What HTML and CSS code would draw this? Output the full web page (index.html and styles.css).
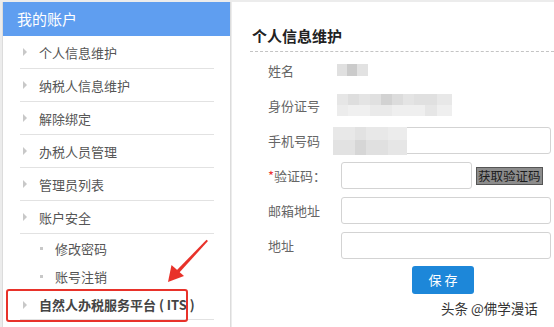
FILE: index.html
```html
<!DOCTYPE html>
<html lang="zh-CN">
<head>
<meta charset="utf-8">
<title>个人信息维护</title>
<link rel="stylesheet" href="styles.css">
</head>
<body>
<div class="page">
  <aside class="sidebar">
    <div class="side-head">我的账户</div>
    <ul class="menu">
      <li class="item"><span class="tri"></span>个人信息维护</li>
      <li class="item"><span class="tri"></span>纳税人信息维护</li>
      <li class="item"><span class="tri"></span>解除绑定</li>
      <li class="item"><span class="tri"></span>办税人员管理</li>
      <li class="item"><span class="tri"></span>管理员列表</li>
      <li class="item"><span class="tri"></span>账户安全</li>
      <li class="sub"><span class="dot"></span>修改密码</li>
      <li class="sub"><span class="dot"></span>账号注销</li>
      <li class="item its"><span class="tri"></span>自然人办税服务平台 ( ITS )</li>
    </ul>
  </aside>
  <main class="main">
    <div class="title-wrap"><h1 class="title">个人信息维护</h1></div>
    <div class="form">
      <div class="row"><span class="label">姓名</span><span class="blur blur-name"></span></div>
      <div class="row"><span class="label">身份证号</span><span class="blur blur-id"><span class="blur-line a"></span><span class="blur-line b"></span></span></div>
      <div class="row"><span class="label">手机号码</span><span class="field-wrap"><span class="input wide"></span><span class="blur blur-phone"></span></span></div>
      <div class="row"><span class="label"><span class="req">*</span>验证码：</span><span class="input short"></span><span class="code-btn">获取验证码</span></div>
      <div class="row"><span class="label">邮箱地址</span><span class="input wide"></span></div>
      <div class="row"><span class="label">地址</span><span class="input wide"></span></div>
      <div class="btn-row"><span class="save">保 存</span></div>
    </div>
  </main>
</div>
<div class="highlight"></div>
<svg class="arrow" width="60" height="60" viewBox="160 232 60 60">
  <path d="M208 241 L206.5 239.8 L176 271 L178.5 273.5 Z" fill="#e8322a"/>
  <path d="M168 282 L171.5 265 L184 276 Z" fill="#e8322a"/>
</svg>
<div class="watermark">头条 @佛学漫话</div>
</body>
</html>
```

FILE: styles.css
```css
* { box-sizing: border-box; }
html, body { margin: 0; padding: 0; }
body {
  width: 554px;
  height: 327px;
  overflow: hidden;
  background: #ececec;
  font-family: "Noto Sans CJK SC", "Noto Sans", sans-serif;
  color: #555;
  position: relative;
}
.page {
  display: flex;
  padding: 2px 0 0 2px;
  height: 327px;
  gap: 1px;
}
.sidebar {
  width: 229px;
  background: #fff;
  border-left: 1px solid #dcdcdc;
  border-right: 1px solid #dcdcdc;
}
.side-head {
  height: 34px;
  line-height: 33px;
  background: #5f9ef0;
  color: #fff;
  font-size: 15px;
  padding-left: 14px;
}
.menu {
  list-style: none;
  margin: 0;
  padding: 0 16px 0 17px;
}
.item {
  height: 33px;
  border-bottom: 1px solid #e2e2e2;
  display: flex;
  align-items: center;
  font-size: 13px;
  color: #555;
}
.tri {
  width: 0;
  height: 0;
  border-left: 4px solid #c8c8c8;
  border-top: 4px solid transparent;
  border-bottom: 4px solid transparent;
  margin: 0 12px 0 3px;
}
.sub {
  height: 28px;
  display: flex;
  align-items: center;
  font-size: 13px;
  color: #555;
  padding-left: 20px;
}
.dot {
  width: 3px;
  height: 3px;
  background: #c8c8c8;
  margin-right: 12px;
}
.its {
  height: 30px;
  font-weight: bold;
  color: #444;
  font-size: 13px;
  white-space: pre;
}
.highlight {
  position: absolute;
  left: 6px;
  top: 289px;
  width: 182px;
  height: 33px;
  border: 2px solid #e8322a;
  border-radius: 3px;
}
.arrow {
  position: absolute;
  left: 160px;
  top: 232px;
}
.main {
  flex: 1;
  background: #fff;
}
.title-wrap {
  margin-left: 18px;
  padding: 24px 0 5px 2px;
  border-bottom: 1px dashed #c4c4c4;
}
.title {
  margin: 0;
  font-size: 15px;
  line-height: 20px;
  font-weight: bold;
  color: #222;
}
.form {
  padding: 1px 0 0 36px;
}
.row {
  height: 35px;
  display: flex;
  align-items: center;
}
.label {
  width: 69px;
  font-size: 13px;
  color: #666;
  flex: none;
}
.req { color: #e33; }
.input {
  display: block;
  height: 27px;
  border: 1px solid #d3d3d3;
  border-radius: 3px;
  background: #fff;
  flex: none;
}
.input.wide { width: 210px; margin-left: 4px; }
.input.short { width: 131px; margin-left: 4px; }
.field-wrap {
  position: relative;
  display: block;
}
.code-btn {
  margin-left: 4px;
  height: 18px;
  line-height: 16px;
  padding: 0 1px;
  font-size: 12.5px;
  color: #1c1c1c;
  background: #8c8c8c;
  border: 1px solid #555;
}
.blur { display: block; }
.blur-name {
  width: 31px;
  height: 12px;
  margin-top: -2px;
  background: linear-gradient(90deg, #e0e0e0 0 10px, #cbcbcb 10px 20px, #e2e2e2 20px);
}
.blur-id {
  width: 115px;
  margin-top: -2px;
}
.blur-line { display: block; height: 11px; }
.blur-line.a {
  background: linear-gradient(90deg, #e6e6e6 0 11px, #dedede 11px 22px, #e4e4e4 22px 33px, #e0e0e0 33px 44px, #d2d2d2 44px 55px, #dcdcdc 55px 66px, #e4e4e4 66px 77px, #e0e0e0 77px 100px, #e8e8e8 100px);
}
.blur-line.b {
  background: linear-gradient(90deg, #ececec 0 11px, #f0f0f0 11px 33px, #eaeaea 33px 55px, #efefef 55px 88px, #e6e6e6 88px 100px, #efefef 100px);
}
.blur-phone {
  position: absolute;
  left: -4px;
  top: 0;
  width: 74px;
  height: 28px;
  background:
    linear-gradient(90deg, #e8e8e8 0 22px, #e2e2e2 22px 33px, #e8e8e8 33px 55px, #ececec 55px 74px) top / 100% 13px no-repeat,
    linear-gradient(90deg, #e2e2e2 0 22px, #d6d6d6 22px 33px, #e0e0e0 33px 55px, #e6e6e6 55px 74px) bottom / 100% 15px no-repeat;
}
.btn-row {
  padding: 3px 0 0 144px;
}
.save {
  display: inline-block;
  width: 62px;
  height: 28px;
  line-height: 28px;
  text-align: center;
  background: #1d87d9;
  color: #fff;
  font-size: 13px;
  border-radius: 3px;
}
.watermark {
  position: absolute;
  left: 441px;
  top: 298px;
  font-size: 13.5px;
  line-height: 20px;
  color: #333;
}
```
